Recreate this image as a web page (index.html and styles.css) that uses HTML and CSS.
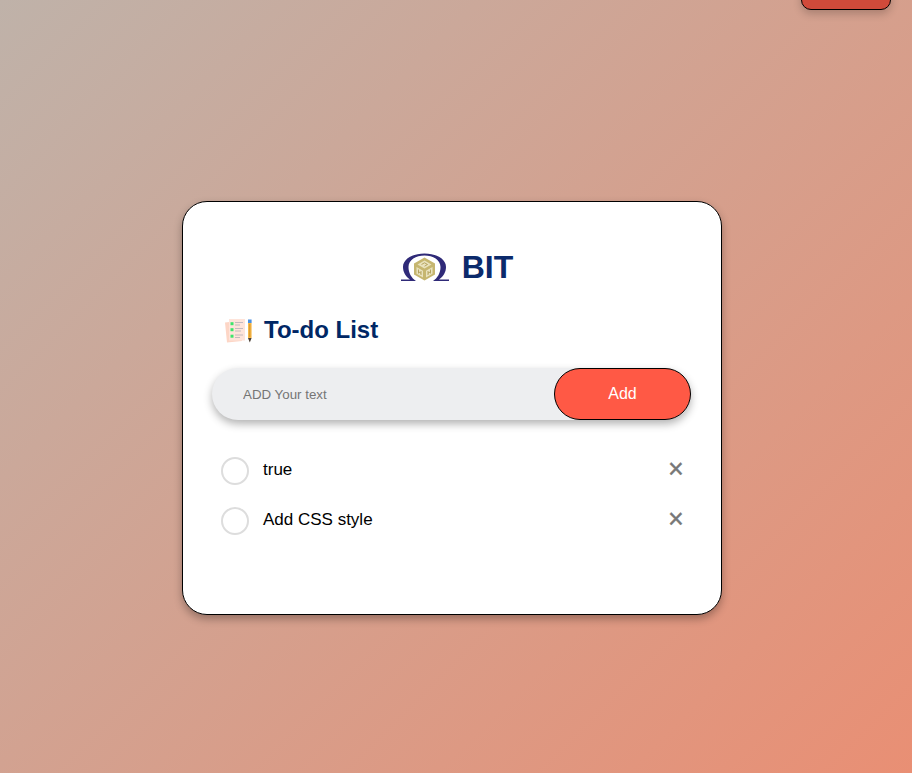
FILE: index.html
```html
<!DOCTYPE html>
<html lang="en">
<head>
<meta charset="utf-8">
<title>To-do List</title>
<link rel="stylesheet" href="styles.css">
</head>
<body>
<div class="page">
  <button class="logout" type="button" aria-label="Log out"></button>
  <main class="card">
    <div class="brand">
      <svg class="brand-logo" viewBox="0 0 50 28" aria-hidden="true">
        <path d="M1 28 V26.4 H10 C5.5 23.5 3 19 3 14 C3 6 12.5 0.5 24.5 0.5 C36.5 0.5 46 6 46 14 C46 19 43.5 23.5 39 26.4 H49 V28 H33 C37.5 25 40.5 20 40.5 14 C40.5 7 33 2.6 24.5 2.6 C16 2.6 8.5 7 8.5 14 C8.5 20 11.5 25 16 28 Z" fill="#2f2a78"/>
        <path d="M24.5 4.5 L35 10.5 V21.5 L24.5 27.5 L14 21.5 V10.5 Z" fill="#c6b670"/>
        <path d="M24.5 7.5 L31.5 11.5 L24.5 15.5 L17.5 11.5 Z M16.5 14 L23 17.7 V24.5 L16.5 20.8 Z M32.5 14 L26 17.7 V24.5 L32.5 20.8 Z" fill="#e9e2bd"/>
        <path d="M21.5 11.5 L24.5 9.8 L27.5 11.5 L24.5 13.2 M18.5 16.5 V20.5 M21 18 V22 M18.5 18.8 L21 20.2 M28 18 V22 M30.5 16.5 V20.5 M28 20.2 L30.5 18.8" fill="none" stroke="#a8964a" stroke-width="0.8"/>
      </svg>
      <span class="brand-name">BIT</span>
    </div>
    <h2 class="title">
      <svg class="title-icon" viewBox="0 0 28 24" aria-hidden="true">
        <path d="M0 3.5 L13 2 L17 22 L2 23.5 Z" fill="#fdd6c6"/>
        <rect x="4" y="0" width="16" height="21.5" fill="#fee4da"/>
        <rect x="5.5" y="3.2" width="3" height="3" fill="#3ee56c"/>
        <rect x="5.5" y="9.2" width="3" height="3" fill="#3ee56c"/>
        <rect x="5.5" y="15.7" width="3" height="3" fill="#3ee56c"/>
        <path d="M10 3.5 H18 M10 6 H15 M10 9.5 H18 M10 12 H16 M10 16 H18 M10 18.5 H15" stroke="#b5aeb8" stroke-width="0.8"/>
        <rect x="23" y="0.5" width="3.6" height="3.5" fill="#4a90e2"/>
        <rect x="23" y="4" width="3.6" height="15" fill="#f7b84b"/>
        <path d="M24.8 5 V18" stroke="#c98a20" stroke-width="0.8"/>
        <path d="M23 19 H26.6 L24.8 23.5 Z" fill="#4a3f35"/>
      </svg>
      <span>To-do List</span>
    </h2>
    <div class="entry">
      <input class="entry-input" type="text" placeholder="ADD Your text">
      <button class="entry-add" type="button">Add</button>
    </div>
    <ul class="tasks">
      <li class="task">
        <span class="task-check"></span>
        <span class="task-text">true</span>
        <span class="task-remove">×</span>
      </li>
      <li class="task">
        <span class="task-check"></span>
        <span class="task-text">Add CSS style</span>
        <span class="task-remove">×</span>
      </li>
    </ul>
  </main>
</div>
</body>
</html>
```
FILE: styles.css
```css
* {
  box-sizing: border-box;
}

html,
body {
  margin: 0;
  height: 100%;
  overflow: hidden;
}

body {
  font-family: "Liberation Sans", Arial, sans-serif;
  background: linear-gradient(135deg, #bfb2a9, #e98f74);
}

.page {
  position: relative;
  display: flex;
  justify-content: center;
  align-items: flex-start;
  height: 100%;
  padding: 201px 8px 0 0;
}

.logout {
  position: absolute;
  top: -30px;
  left: 801px;
  width: 90px;
  height: 40px;
  border: 1px solid #000;
  border-radius: 10px;
  background: #d04a3a;
  box-shadow: 0 4px 8px rgba(0, 0, 0, 0.2);
}

.card {
  width: 540px;
  height: 414px;
  padding: 39px 30px 0 29px;
  background: #fff;
  border: 1px solid #000;
  border-radius: 25px;
  box-shadow: 0 4px 8px rgba(0, 0, 0, 0.3);
}

.brand {
  display: flex;
  justify-content: center;
  align-items: center;
  gap: 12px;
  height: 52px;
  padding-left: 10px;
}

.brand-logo {
  width: 50px;
  height: 28px;
}

.brand-name {
  font-size: 32px;
  font-weight: 700;
  color: #0b2a6b;
}

.title {
  display: flex;
  align-items: center;
  gap: 11px;
  margin: 11px 0 12px;
  padding-left: 13px;
  height: 52px;
  font-size: 24px;
  font-weight: 700;
  color: #002765;
}

.title-icon {
  width: 28px;
  height: 24px;
  margin-top: 1px;
}

.entry {
  display: flex;
  align-items: stretch;
  width: 479px;
  height: 52px;
  background: #edeef0;
  border-radius: 30px;
  box-shadow: 0 4px 8px rgba(0, 0, 0, 0.3);
}

.entry-input {
  flex: 1;
  min-width: 0;
  padding: 0 0 0 31px;
  border: 0;
  outline: 0;
  background: transparent;
  font-family: inherit;
  font-size: 13.33px;
}

.entry-input::placeholder {
  color: #757575;
}

.entry-add {
  width: 137px;
  border: 1px solid #000;
  border-radius: 40px;
  background: #ff5945;
  color: #fff;
  font-family: inherit;
  font-size: 16px;
}

.tasks {
  margin: 24px 0 0;
  padding: 0;
  list-style: none;
}

.task {
  display: flex;
  align-items: flex-start;
  height: 50px;
  padding: 13px 0 0 9px;
  font-size: 17px;
  color: #000;
}

.task-check {
  flex: none;
  width: 28px;
  height: 28px;
  border: 2px solid #ddd;
  border-radius: 50%;
}

.task-text {
  flex: 1;
  margin-left: 14px;
  line-height: 26px;
}

.task-remove {
  width: 30px;
  text-align: center;
  font-size: 27px;
  line-height: 24px;
  color: #777;
  -webkit-text-stroke: 0.4px #777;
}
```
